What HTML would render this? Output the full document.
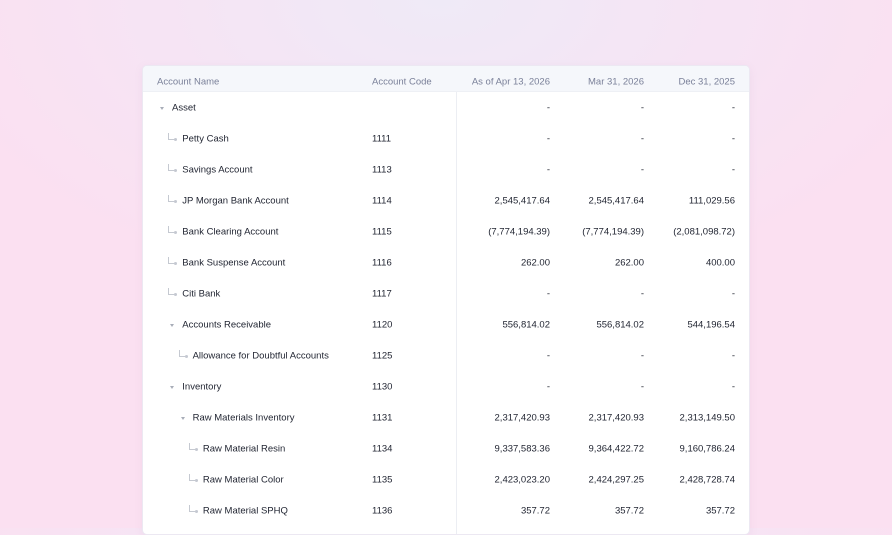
<!DOCTYPE html>
<html><head><style>
*{margin:0;padding:0;box-sizing:border-box}
body{width:892px;height:528px;overflow:hidden;font-family:"Liberation Sans",sans-serif;
background:radial-gradient(ellipse 520px 300px at 440px 0px,#efeaf7 0%,#f6e4f4 55%,#fbe0f1 100%);position:relative}
.card{position:absolute;left:142px;top:65px;width:608px;height:470px;background:#fff;border-radius:5px;border:1px solid #ece8f2;overflow:hidden;box-shadow:0 2px 8px rgba(180,150,190,.12)}
.hdr{height:26px;background:#f5f7fb;border-bottom:1px solid #eef0f5;position:relative}
.hdr .t{top:16px}
.row{height:31px;position:relative}
.t{position:absolute;top:50%;transform:translateY(-50%);font-size:9.5px;white-space:nowrap;color:#1f2330}
.hdr .t{color:#7a8099;font-size:9.5px}
.r{text-align:right}
.vl{position:absolute;left:313px;top:0;bottom:0;width:1px;background:#eceef3}
.tri{position:absolute;top:50%;margin-top:-1px;width:0;height:0;border-left:2.5px solid transparent;border-right:2.5px solid transparent;border-top:3px solid #a8adb8}
.arr{position:absolute;top:50%;margin-top:-6px;width:6px;height:7px;border-left:1px solid #c5c9d1;border-bottom:1px solid #c5c9d1}
.arr:after{content:"";position:absolute;right:-3px;bottom:-2.5px;width:3px;height:3px;background:#c5c9d1;border-radius:50%}
</style></head><body>
<div class="card">
<div class="vl"></div>
<div class="hdr">
<span class="t" style="left:14px">Account Name</span>
<span class="t" style="left:229px">Account Code</span>
<span class="t r" style="right:199px">As of Apr 13, 2026</span>
<span class="t r" style="right:105px">Mar 31, 2026</span>
<span class="t r" style="right:14px">Dec 31, 2025</span>
</div>
<div id="rows"></div>
</div>
<script>
var d=[
['t',0,'Asset','','-','-','-'],
['a',1,'Petty Cash','1111','-','-','-'],
['a',1,'Savings Account','1113','-','-','-'],
['a',1,'JP Morgan Bank Account','1114','2,545,417.64','2,545,417.64','111,029.56'],
['a',1,'Bank Clearing Account','1115','(7,774,194.39)','(7,774,194.39)','(2,081,098.72)'],
['a',1,'Bank Suspense Account','1116','262.00','262.00','400.00'],
['a',1,'Citi Bank','1117','-','-','-'],
['t',1,'Accounts Receivable','1120','556,814.02','556,814.02','544,196.54'],
['a',2,'Allowance for Doubtful Accounts','1125','-','-','-'],
['t',1,'Inventory','1130','-','-','-'],
['t',2,'Raw Materials Inventory','1131','2,317,420.93','2,317,420.93','2,313,149.50'],
['a',3,'Raw Material Resin','1134','9,337,583.36','9,364,422.72','9,160,786.24'],
['a',3,'Raw Material Color','1135','2,423,023.20','2,424,297.25','2,428,728.74'],
['a',3,'Raw Material SPHQ','1136','357.72','357.72','357.72'],
['a',3,'','','','','']];
var h='';
d.forEach(function(r){
var tx=29+r[1]*10.3;
var ic=r[0]=='t'?'<span class="tri" style="left:'+(tx-12)+'px"></span>':'<span class="arr" style="left:'+(tx-14)+'px"></span>';
if(!r[2])ic='';
h+='<div class="row">'+ic+'<span class="t" style="left:'+tx+'px">'+r[2]+'</span><span class="t" style="left:229px">'+r[3]+'</span><span class="t r" style="right:199px">'+r[4]+'</span><span class="t r" style="right:105px">'+r[5]+'</span><span class="t r" style="right:14px">'+r[6]+'</span></div>';
});
document.getElementById('rows').innerHTML=h;
</script>
</body></html>
